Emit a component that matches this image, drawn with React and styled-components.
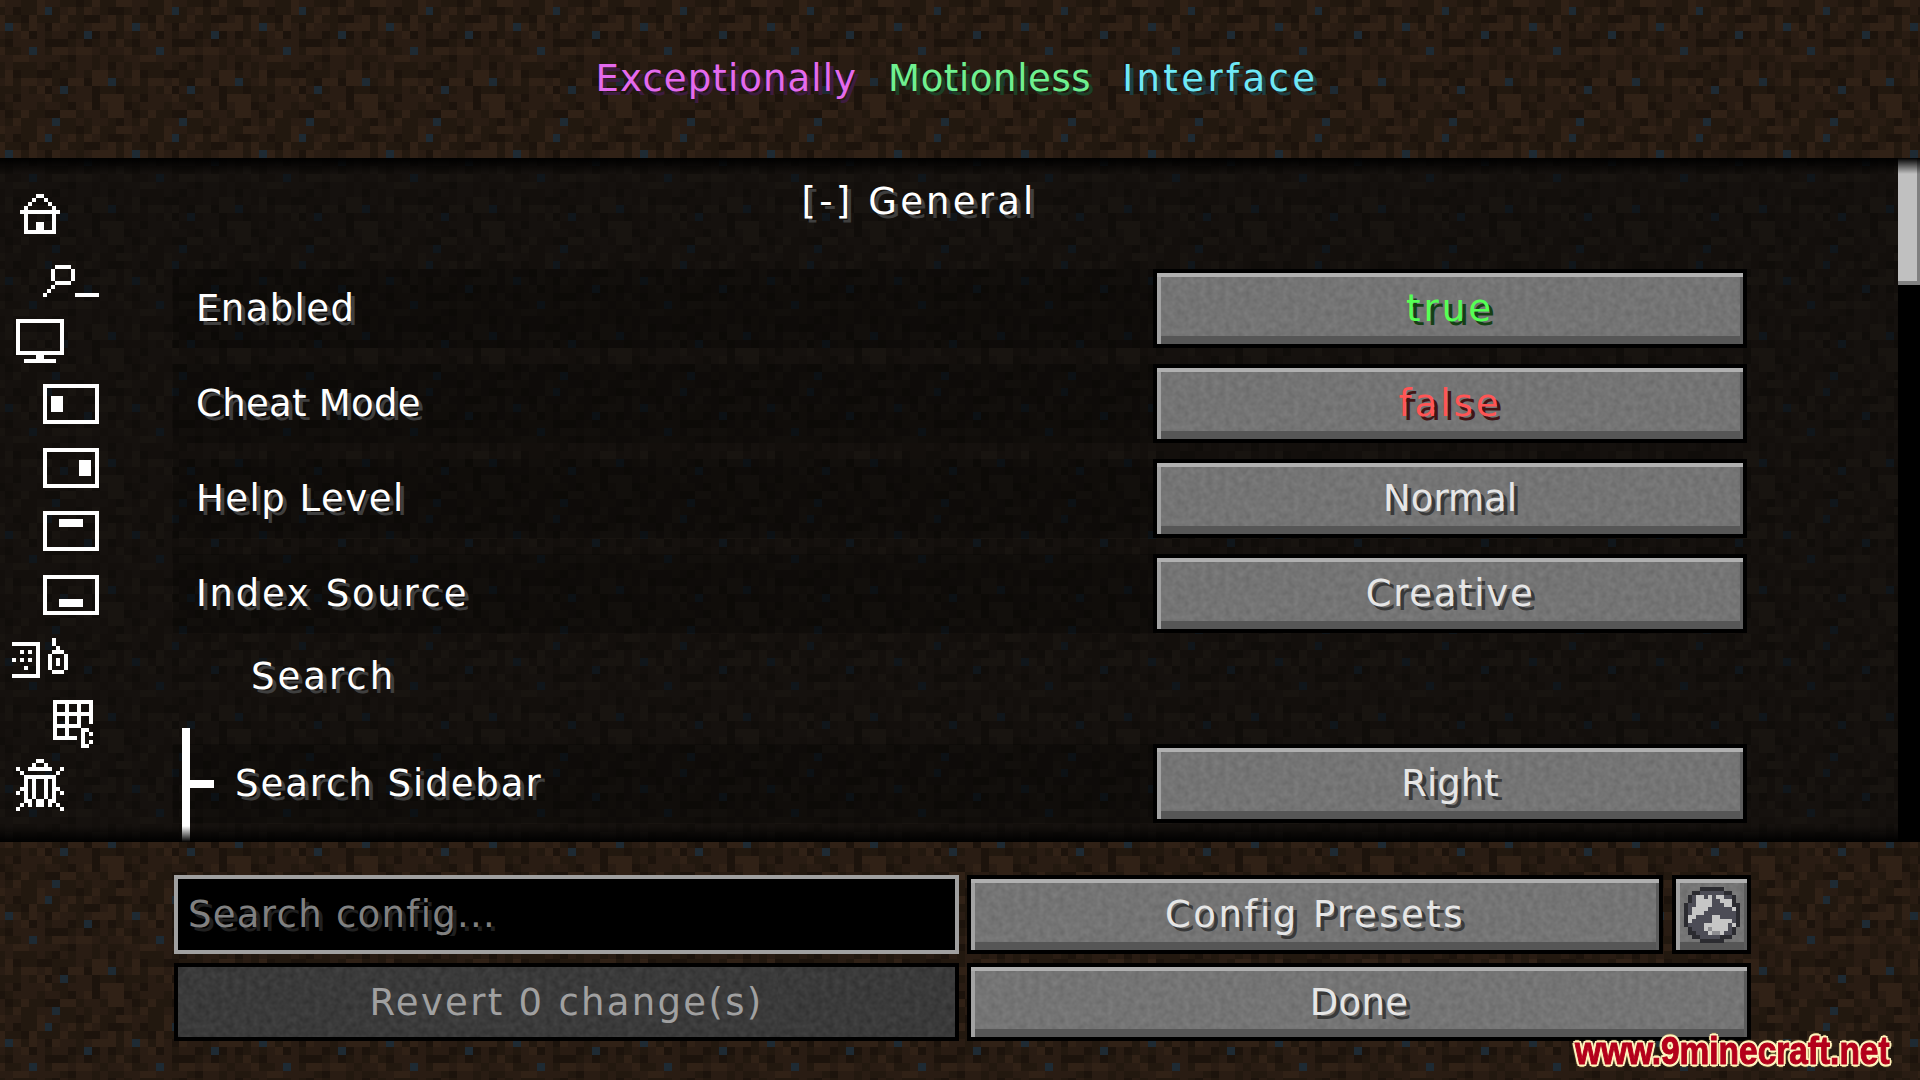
import React from 'react';
import styled, { createGlobalStyle } from 'styled-components';

// dirt texture, read off the reference: 16x16 cells, 0 = darkest, b = blue speck
const DIRT = [
  '102131122b112122',
  '1332211322110131',
  '00120113b1231321',
  '3131103111311002',
  '313b313203221233',
  '0121230212201b02',
  '1310222200012012',
  '223112b213323321',
  '1122332222102212',
  '0212111210212212',
  '1213011001112133',
  'b123133231033033',
  '1011121302b12201',
  '3312022231122203',
  '3301222122102302',
  '3320131100331221',
];

const tile = (palette) => {
  let rects = '';
  DIRT.forEach((row, y) => {
    row.split('').forEach((c, x) => {
      rects += `<rect x='${x}' y='${y}' width='1.02' height='1.02' fill='${palette[c]}'/>`;
    });
  });
  const svg = `<svg xmlns='http://www.w3.org/2000/svg' width='127' height='127' viewBox='0 0 16 16' shape-rendering='crispEdges'>${rects}</svg>`;
  return `url("data:image/svg+xml,${encodeURIComponent(svg)}")`;
};

const BAND_TILE = tile({ 0: '#1c130c', 1: '#22180f', 2: '#291c13', 3: '#302116', b: '#1e2a33' });
const LIST_TILE = tile({ 0: '#100d0a', 1: '#130f0c', 2: '#15110e', 3: '#181410', b: '#10161b' });

const noiseSvg = `<svg xmlns='http://www.w3.org/2000/svg' width='300' height='160'><filter id='n' color-interpolation-filters='sRGB'><feTurbulence type='fractalNoise' baseFrequency='.16' numOctaves='2' seed='4'/><feColorMatrix values='0 0 0 1 -.1 0 0 0 1 -.1 0 0 0 1 -.1 0 0 0 0 .1'/></filter><rect width='100%' height='100%' filter='url(#n)'/></svg>`;
const STONE_NOISE = `url("data:image/svg+xml,${encodeURIComponent(noiseSvg)}")`;

const GlobalStyle = createGlobalStyle`
  html, body {
    margin: 0;
    padding: 0;
    background: #000;
  }
  * {
    box-sizing: border-box;
  }
`;

const Screen = styled.div`
  position: relative;
  display: flex;
  flex-direction: column;
  width: 1920px;
  height: 1080px;
  overflow: hidden;
  font-family: 'DejaVu Sans', sans-serif;
  font-size: 37px;
  letter-spacing: 3px;
  color: #fff;
`;

const Header = styled.header`
  display: flex;
  justify-content: center;
  align-items: center;
  gap: 31px;
  height: 158px;
  padding: 0 6px 2px 0;
  background: ${BAND_TILE} 108px 118px / 127px 127px fixed;
`;

const TitleWord = styled.span`
  color: ${(p) => p.$color};
  text-shadow: 4px 4px 0 ${(p) => p.$shadow};
  letter-spacing: ${(p) => p.$spacing}px;
`;

const Body = styled.div`
  position: relative;
  display: flex;
  height: 684px;
  overflow: hidden;
  background: ${LIST_TILE} 108px 118px / 127px 127px fixed;

  &::before,
  &::after {
    content: '';
    position: absolute;
    left: 0;
    right: 0;
    z-index: 2;
    height: 16px;
    pointer-events: none;
  }
  &::before {
    top: 0;
    background: linear-gradient(#000, transparent);
  }
  &::after {
    bottom: 0;
    background: linear-gradient(transparent, #000);
  }
`;

const Sidebar = styled.nav`
  flex: 0 0 173px;
  padding: 24px 0 0 8px;
`;

const IconCell = styled.div`
  display: flex;
  justify-content: center;
  align-items: center;
  width: 64px;
  height: 63.5px;
  margin-left: ${(p) => (p.$indent ? 31 : 0)}px;
`;

const ConfigList = styled.main`
  flex: 1;
  min-width: 0;
`;

const GroupTitle = styled.div`
  display: flex;
  justify-content: center;
  align-items: center;
  width: 1492px;
  height: 86px;
  margin-bottom: 25px;
  text-shadow: 4px 4px 0 #3f3f3f;
  letter-spacing: 3.2px;
`;

const Row = styled.div`
  display: flex;
  height: 79px;
  margin-bottom: 16px;
`;

const LabelCell = styled.div`
  display: flex;
  flex: 0 0 980px;
  align-items: center;
  padding-left: ${(p) => (p.$nested ? 0 : 23)}px;
  background: rgba(0, 0, 0, 0.22);
  letter-spacing: ${(p) => p.$spacing}px;
  text-shadow: 4px 4px 0 #3f3f3f;
`;

const SubHeading = styled.div`
  display: flex;
  align-items: center;
  height: 54px;
  margin-bottom: 41px;
  padding-left: 78px;
  text-shadow: 4px 4px 0 #3f3f3f;
`;

const TreeGuide = styled.span`
  position: relative;
  align-self: flex-start;
  flex: none;
  width: 8px;
  height: 130px;
  margin: -16px 0 0 9px;
  background: #fff;

  &::after {
    content: '';
    position: absolute;
    top: 52px;
    left: 8px;
    width: 24px;
    height: 8px;
    background: #fff;
  }
`;

const NestedLabel = styled.span`
  margin-left: 45px;
`;

const McButton = styled.button`
  display: flex;
  justify-content: center;
  align-items: center;
  flex: ${(p) => (p.$grow ? 1 : 'none')};
  width: ${(p) => (p.$width ? `${p.$width}px` : 'auto')};
  padding: 0;
  border: 4px solid #000;
  font: inherit;
  letter-spacing: ${(p) => p.$spacing ?? 3}px;
  color: ${(p) => p.$color || '#e6e6e6'};
  text-shadow: 4px 4px 0 ${(p) => p.$shadow || '#393939'};
  background: ${STONE_NOISE}, #767676;
  box-shadow:
    inset 0 4px 0 #b0b0b0,
    inset 4px 0 0 #a2a2a2,
    inset -3px 0 0 #5c5c5c,
    inset 0 -8px 0 #565656;
`;

const DisabledButton = styled.button`
  display: flex;
  justify-content: center;
  align-items: center;
  padding: 0;
  border: 4px solid #000;
  font: inherit;
  letter-spacing: 2.3px;
  color: #a0a0a0;
  background: ${STONE_NOISE}, #363636;
`;

const Scrollbar = styled.div`
  flex: 0 0 22px;
  background: #000;
`;

const ScrollThumb = styled.div`
  height: 127px;
  background: #c0c0c0;
  box-shadow:
    inset -3px 0 0 #808080,
    inset 0 -4px 0 #808080;
`;

const Footer = styled.footer`
  display: grid;
  grid-template-columns: 785px 784px;
  grid-template-rows: 79px 78px;
  gap: 9px 8px;
  flex: 1;
  padding: 33px 0 0 174px;
  background: ${BAND_TILE} 108px 118px / 127px 127px fixed;
`;

const SearchInput = styled.input`
  width: 100%;
  padding: 0 0 0 10px;
  border: 4px solid #a0a0a0;
  outline: none;
  border-radius: 0;
  font: inherit;
  letter-spacing: 1.3px;
  color: #e0e0e0;
  background: #000;

  &::placeholder {
    color: #808080;
    opacity: 1;
    text-shadow: 4px 4px 0 #202020;
  }
`;

const FooterActions = styled.div`
  display: flex;
  gap: 9px;
`;

const Watermark = styled.div`
  position: absolute;
  right: 30px;
  bottom: 7px;
  z-index: 3;
  font-family: 'Liberation Sans', sans-serif;
  font-size: 38px;
  font-weight: 700;
  letter-spacing: 0;
  transform: scaleX(0.88);
  transform-origin: right center;
  color: #b3001b;
  -webkit-text-stroke: 1px #b3001b;
  text-shadow:
    2px 0 0 #fff3c0, -2px 0 0 #fff3c0, 0 2px 0 #fff3c0, 0 -2px 0 #fff3c0,
    2px 2px 0 #fff3c0, -2px 2px 0 #fff3c0, 2px -2px 0 #fff3c0, -2px -2px 0 #fff3c0,
    3px 0 1px #e8d890, -3px 0 1px #e8d890, 0 3px 1px #e8d890, 0 -3px 1px #e8d890;
`;

// draws rows of characters as 4px screen pixels, one path per colour
const PixelIcon = ({ rows, colors = { '#': '#fff' } }) => {
  const paths = {};
  rows.forEach((row, y) => {
    row.split('').forEach((c, x) => {
      if (colors[c]) paths[c] = `${paths[c] || ''}M${x} ${y}h1v1h-1z`;
    });
  });
  const w = rows[0].length;
  const h = rows.length;
  return (
    <svg width={w * 4} height={h * 4} viewBox={`0 0 ${w} ${h}`} shapeRendering="crispEdges">
      {Object.keys(paths).map((c) => <path key={c} d={paths[c]} fill={colors[c]} />)}
    </svg>
  );
};

const frame = (from, to, rowFrom, rowTo) => {
  const rows = [];
  for (let y = 0; y < 10; y++) {
    let r = '';
    for (let x = 0; x < 14; x++) {
      const edge = x === 0 || x === 13 || y === 0 || y === 9;
      const fill = x >= from && x <= to && y >= rowFrom && y <= rowTo;
      r += edge || fill ? '#' : '.';
    }
    rows.push(r);
  }
  return rows;
};

const ICONS = [
  { rows: ['....##....', '...#..#...', '..#....#..', '.#......#.', '##########', '.#......#.', '.#......#.', '.#..##..#.', '.#..##..#.', '.########.'] },
  { indent: true, rows: ['..............', '..............', '...####.......', '..#....#......', '..#....#......', '..#....#......', '...####.......', '..#...........', '.#............', '#.......######'] },
  { rows: ['############', '#..........#', '#..........#', '#..........#', '#..........#', '#..........#', '#..........#', '#..........#', '############', '.....##.....', '..########..'] },
  { indent: true, rows: frame(2, 4, 3, 6) },
  { indent: true, rows: frame(9, 11, 3, 6) },
  { indent: true, rows: frame(4, 9, 2, 3) },
  { indent: true, rows: frame(4, 9, 6, 7) },
  { rows: ['..........#...', '#######...#...', '......#....#..', '..#.#.#...###.', '......#..#...#', '#.#.#.#..#.#.#', '......#..#.#.#', '...#..#..#...#', '......#...###.', '#######.......'] },
  { indent: true, rows: ['...........', '.##########', '.#..#..#..#', '.#..#..#..#', '.##########', '.#..#..#..#', '.#..#..#..#', '.#######...', '.#..#...##.', '.#..#...#.#', '.######.#..', '........#.#', '........##.'] },
  { rows: ['.....##.....', '....#..#....', '#..######..#', '.#........#.', '..########..', '..#.#..#.#..', '..#.#..#.#..', '.##.#..#.##.', '#.#.#..#.#.#', '..#.#..#.#..', '..##.##.##..', '.#.#.##.#.#.', '#..........#'] },
];

const GLOBE = [
  '....kkkkkk....',
  '..kkddddddkk..',
  '.kdlldldllddk.',
  '.kdllllddlllk.',
  'kddlllldddllkk',
  'kdllllddddddlk',
  'kdlllddddddddk',
  'kllddddllddddk',
  'kldddddllllldk',
  'kddddlllllldlk',
  '.kdddlmlllldk.',
  '.kkdddlmmlddk.',
  '..kkdddddkkk..',
  '....kkkkkk....',
];

export default function App() {
  return (
    <Screen>
      <GlobalStyle />
      <Header>
        <TitleWord $color="#e46aee" $shadow="#3d1c40" $spacing={1.1}>Exceptionally</TitleWord>
        <TitleWord $color="#6ff08f" $shadow="#1d4026" $spacing={0.6}>Motionless</TitleWord>
        <TitleWord $color="#6fe8f6" $shadow="#1d3e42" $spacing={3.4}>Interface</TitleWord>
      </Header>
      <Body>
        <Sidebar>
          {ICONS.map((icon, i) => (
            <IconCell key={i} $indent={icon.indent}>
              <PixelIcon rows={icon.rows} />
            </IconCell>
          ))}
        </Sidebar>
        <ConfigList>
          <GroupTitle>[-] General</GroupTitle>
          <Row>
            <LabelCell $spacing={1.4}>Enabled</LabelCell>
            <McButton $width={594} $color="#55ff55" $shadow="#153f15">true</McButton>
          </Row>
          <Row>
            <LabelCell $spacing={0.3}>Cheat Mode</LabelCell>
            <McButton $width={594} $color="#ff5555" $shadow="#3f1515">false</McButton>
          </Row>
          <Row>
            <LabelCell $spacing={1.5}>Help Level</LabelCell>
            <McButton $width={594} $spacing={0}>Normal</McButton>
          </Row>
          <Row>
            <LabelCell $spacing={2.7}>Index Source</LabelCell>
            <McButton $width={594} $spacing={1.7}>Creative</McButton>
          </Row>
          <SubHeading>Search</SubHeading>
          <Row>
            <LabelCell $nested $spacing={1.95}>
              <TreeGuide />
              <NestedLabel>Search Sidebar</NestedLabel>
            </LabelCell>
            <McButton $width={594} $spacing={0}>Right</McButton>
          </Row>
        </ConfigList>
        <Scrollbar>
          <ScrollThumb />
        </Scrollbar>
      </Body>
      <Footer>
        <SearchInput placeholder="Search config..." readOnly />
        <FooterActions>
          <McButton $grow $spacing={2.5}>Config Presets</McButton>
          <McButton $width={79}>
            <PixelIcon rows={GLOBE} colors={{ k: '#2b2b30', d: '#4c4c56', l: '#c6c6c6', m: '#8c8c90' }} />
          </McButton>
        </FooterActions>
        <DisabledButton disabled>Revert 0 change(s)</DisabledButton>
        <McButton $spacing={0.3}>Done</McButton>
      </Footer>
      <Watermark>www.9minecraft.net</Watermark>
    </Screen>
  );
}
